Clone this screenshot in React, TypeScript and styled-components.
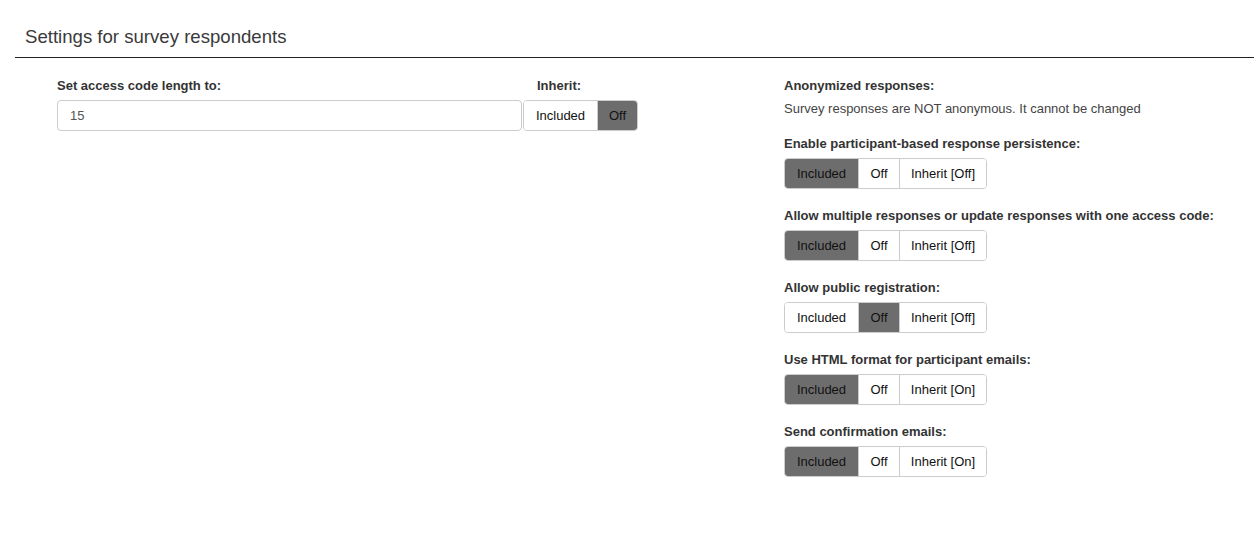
import React from "react";
import styled, { createGlobalStyle } from "styled-components";

const GlobalStyle = createGlobalStyle`
  html, body {
    margin: 0;
    padding: 0;
    background: #fff;
    font-family: "Liberation Sans", Arial, sans-serif;
    font-size: 13px;
    color: #333;
  }
`;

type Option = "Included" | "Off" | "Inherit";

interface SettingRow {
  label: string;
  active: Option;
  inherit: string;
}

const rows: SettingRow[] = [
  { label: "Enable participant-based response persistence:", active: "Included", inherit: "Off" },
  { label: "Allow multiple responses or update responses with one access code:", active: "Included", inherit: "Off" },
  { label: "Allow public registration:", active: "Off", inherit: "Off" },
  { label: "Use HTML format for participant emails:", active: "Included", inherit: "On" },
  { label: "Send confirmation emails:", active: "Included", inherit: "On" },
];

const Page = styled.div`
  padding: 17px 0 0 15px;
`;

const Header = styled.div`
  border-bottom: 1px solid #222;
  padding: 10px 0 10px 10px;
`;

const Title = styled.h3`
  margin: 0;
  font-size: 18.6px;
  font-weight: normal;
  color: #3a3a3a;
  line-height: 20px;
`;

const Body = styled.div`
  display: flex;
  padding: 20px 0 0 42px;
`;

const LeftCol = styled.div`
  display: flex;
  width: 581px;
`;

const RightCol = styled.div`
  margin-left: 146px;
  display: flex;
  flex-direction: column;
`;

const Field = styled.div<{ $grow?: boolean }>`
  display: flex;
  flex-direction: column;
  flex: ${(p) => (p.$grow ? 1 : "none")};
`;

const Label = styled.label<{ $indent?: number }>`
  font-weight: bold;
  font-size: 13px;
  color: #333;
  line-height: 16px;
  margin-bottom: 6px;
  padding-left: ${(p) => p.$indent ?? 0}px;
`;

const TextInput = styled.input`
  height: 31px;
  box-sizing: border-box;
  border: 1px solid #ccc;
  border-radius: 4px;
  padding: 0 12px;
  font-family: inherit;
  font-size: 13px;
  color: #555;
  margin-right: 1px;
  outline: none;
`;

const Group = styled.div`
  display: inline-flex;
  height: 31px;
  box-sizing: border-box;
  border: 1px solid #ccc;
  border-radius: 4px;
  overflow: hidden;
  align-self: flex-start;
`;

const Seg = styled.button<{ $active: boolean; $w: number }>`
  width: ${(p) => p.$w}px;
  border: none;
  border-left: 1px solid #ccc;
  background: ${(p) => (p.$active ? "#6d6d6d" : "#fff")};
  font-family: inherit;
  font-size: 13px;
  color: #111;
  padding: 0;
  cursor: pointer;

  &:first-child {
    border-left: none;
  }
`;

const Note = styled.div`
  font-size: 13px;
  color: #444;
  line-height: 16px;
  margin: 1px 0 19px;
`;

const Setting = styled.div`
  display: flex;
  flex-direction: column;
  margin-bottom: 19px;
`;

export default function App() {
  return (
    <Page>
      <GlobalStyle />
      <Header>
        <Title>Settings for survey respondents</Title>
      </Header>
      <Body>
        <LeftCol>
          <Field $grow>
            <Label>Set access code length to:</Label>
            <TextInput defaultValue="15" />
          </Field>
          <Field>
            <Label $indent={14}>Inherit:</Label>
            <Group>
              <Seg $active={false} $w={73}>Included</Seg>
              <Seg $active $w={40}>Off</Seg>
            </Group>
          </Field>
        </LeftCol>
        <RightCol>
          <Label>Anonymized responses:</Label>
          <Note>Survey responses are NOT anonymous. It cannot be changed</Note>
          {rows.map((r) => (
            <Setting key={r.label}>
              <Label>{r.label}</Label>
              <Group>
                <Seg $active={r.active === "Included"} $w={73}>Included</Seg>
                <Seg $active={r.active === "Off"} $w={41}>Off</Seg>
                <Seg $active={r.active === "Inherit"} $w={87}>Inherit [{r.inherit}]</Seg>
              </Group>
            </Setting>
          ))}
        </RightCol>
      </Body>
    </Page>
  );
}
